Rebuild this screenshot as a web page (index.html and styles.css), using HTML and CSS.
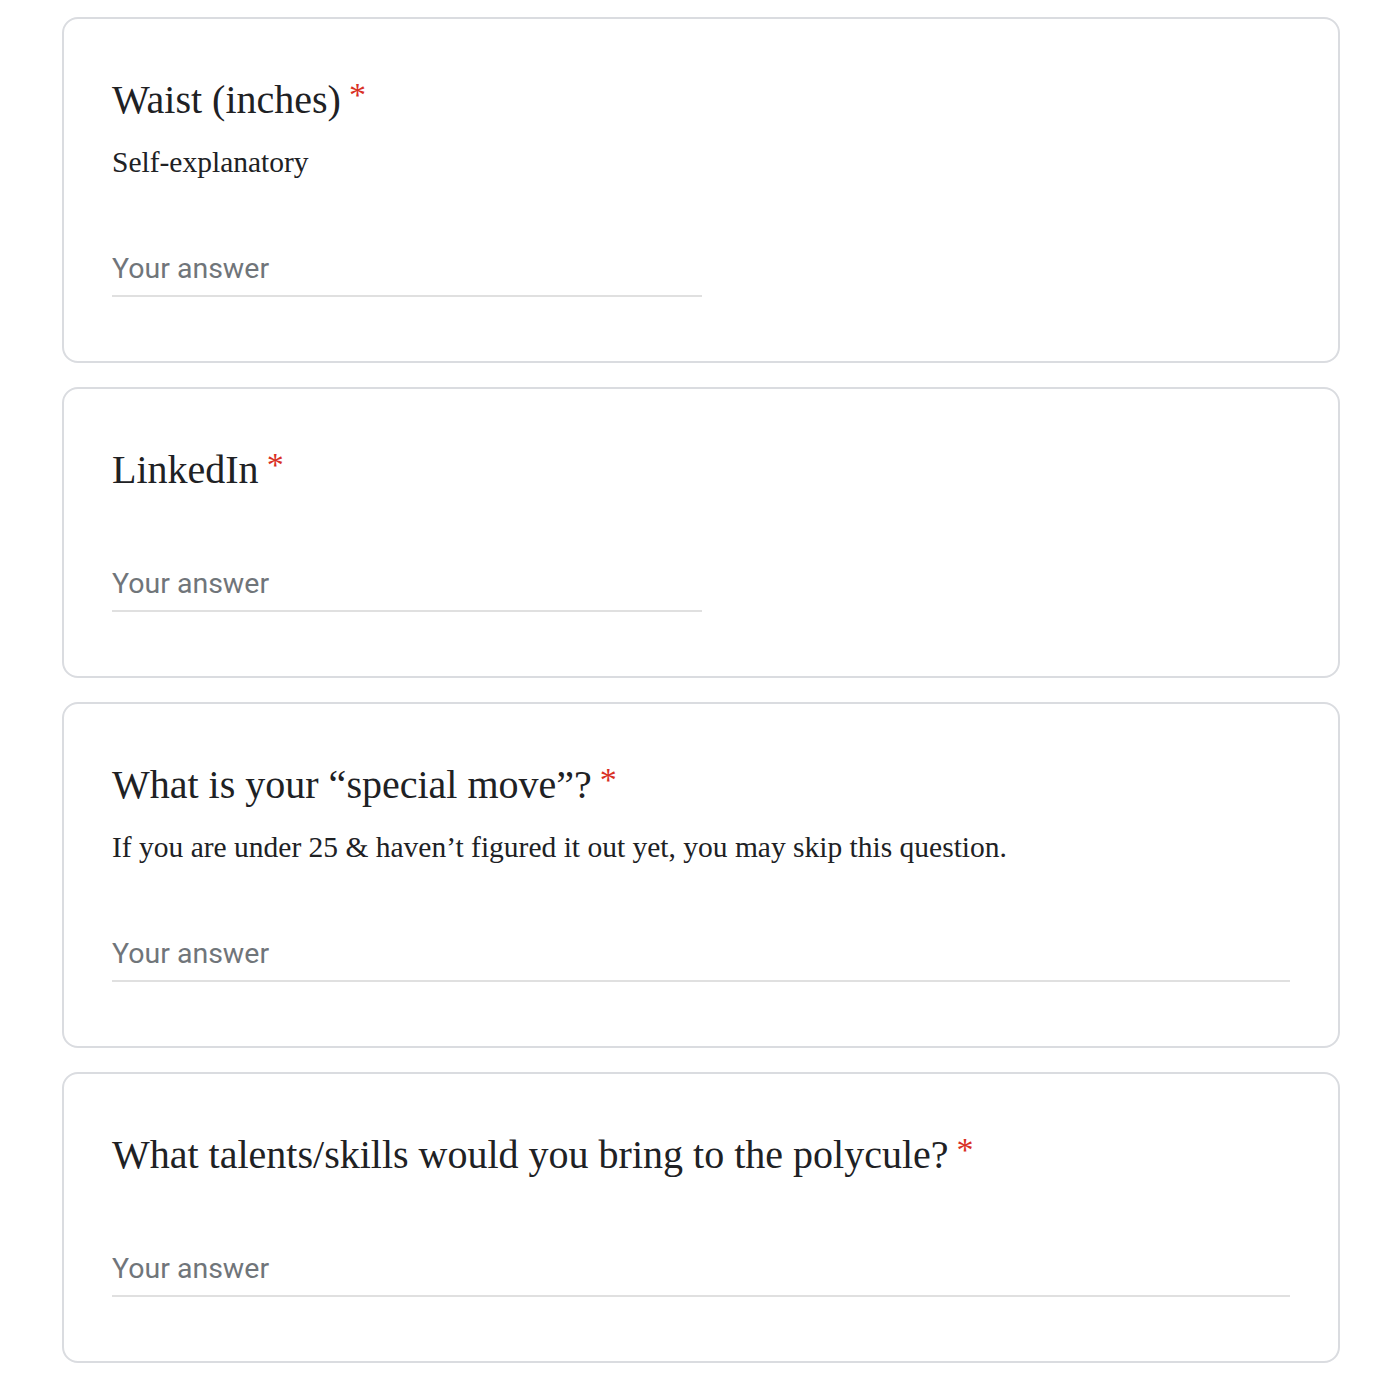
FILE: index.html
```html
<!DOCTYPE html>
<html>
<head>
<meta charset="utf-8">
<link rel="stylesheet" href="styles.css">
</head>
<body>
<main class="form">
  <section class="card">
    <div class="q-head">
      <div class="q-title">Waist (inches)<span class="req">*</span></div>
      <div class="q-desc">Self-explanatory</div>
    </div>
    <div class="answer short">Your answer</div>
  </section>
  <section class="card">
    <div class="q-head">
      <div class="q-title">LinkedIn<span class="req">*</span></div>
    </div>
    <div class="answer short">Your answer</div>
  </section>
  <section class="card">
    <div class="q-head">
      <div class="q-title">What is your “special move”?<span class="req">*</span></div>
      <div class="q-desc">If you are under 25 &amp; haven’t figured it out yet, you may skip this question.</div>
    </div>
    <div class="answer long">Your answer</div>
  </section>
  <section class="card">
    <div class="q-head">
      <div class="q-title">What talents/skills would you bring to the polycule?<span class="req">*</span></div>
    </div>
    <div class="answer long">Your answer</div>
  </section>
</main>
</body>
</html>
```
FILE: styles.css
```css
html, body {
  margin: 0;
  padding: 0;
  background: #ffffff;
}
.form {
  display: flex;
  flex-direction: column;
  gap: 24px;
  padding: 17px 60px 0 62px;
}
.card {
  border: 2px solid #dadce0;
  border-radius: 16px;
  padding: 57px 48px 64px 48px;
  background: #fff;
}
.q-title {
  font-family: "Liberation Serif", "Times New Roman", serif;
  font-size: 40px;
  line-height: 48px;
  color: #202124;
}
.req {
  color: #d93025;
  font-size: 34px;
  line-height: 0;
  padding-left: 8px;
  vertical-align: 7px;
}
.q-desc {
  font-family: "Liberation Serif", "Times New Roman", serif;
  font-size: 29.5px;
  line-height: 34px;
  color: #202124;
  margin-top: 21px;
}
.answer {
  margin-top: 70px;
  font-family: Roboto, "Liberation Sans", sans-serif;
  font-size: 28.5px;
  line-height: 40px;
  color: #70757a;
  padding-bottom: 6px;
  border-bottom: 2px solid #e0e0e0;
}
.answer.short {
  width: 590px;
}
```
